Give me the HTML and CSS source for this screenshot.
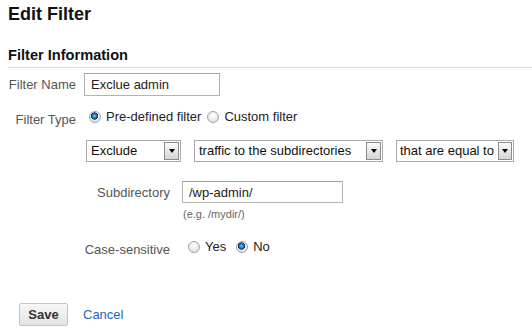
FILE: index.html
```html
<!DOCTYPE html>
<html>
<head>
<meta charset="utf-8">
<title>Edit Filter</title>
<link rel="stylesheet" href="styles.css">
</head>
<body>
<div class="page">
  <h1 class="title">Edit Filter</h1>
  <h2 class="section">Filter Information</h2>
  <div class="form">
    <div class="row name-row">
      <label class="lbl" for="fname">Filter Name</label>
      <input id="fname" class="textbox name-box" type="text" value="Exclue admin">
    </div>
    <div class="row type-row">
      <span class="lbl">Filter Type</span>
      <label class="option first"><input class="radio" type="radio" name="ftype" checked>Pre-defined filter</label>
      <label class="option second"><input class="radio" type="radio" name="ftype">Custom filter</label>
    </div>
    <div class="selects">
      <div class="select s1"><span class="select-text">Exclude</span><span class="arrow"></span></div>
      <div class="select s2"><span class="select-text">traffic to the subdirectories</span><span class="arrow"></span></div>
      <div class="select s3"><span class="select-text">that are equal to</span><span class="arrow"></span></div>
    </div>
    <div class="sub">
      <div class="row sub-row">
        <label class="sublbl" for="subdir">Subdirectory</label>
        <input id="subdir" class="textbox sub-box" type="text" value="/wp-admin/">
      </div>
      <div class="hint">(e.g. /mydir/)</div>
      <div class="row case-row">
        <span class="sublbl">Case-sensitive</span>
        <label class="option yes"><input class="radio" type="radio" name="case">Yes</label>
        <label class="option no"><input class="radio" type="radio" name="case" checked>No</label>
      </div>
    </div>
  </div>
  <div class="actions">
    <button class="save" type="button">Save</button>
    <a class="cancel" href="#">Cancel</a>
  </div>
</div>
</body>
</html>
```
FILE: styles.css
```css
* { box-sizing: border-box; }

body {
  margin: 0;
  font-family: "Liberation Sans", Arial, sans-serif;
  font-size: 13px;
  color: #222;
  background: #fff;
}

.page { padding-left: 8px; }

.title {
  margin: 3px 0 0;
  font-size: 18px;
  line-height: 22px;
  font-weight: bold;
  color: #111;
}

.section {
  margin: 21px 0 0;
  font-size: 14.6px;
  line-height: 18px;
  font-weight: bold;
  color: #111;
  padding-bottom: 3px;
  border-bottom: 1px solid #dcdcdc;
}

.form { padding-top: 5px; }

.row { display: flex; align-items: center; }

.lbl {
  flex: none;
  width: 68px;
  margin-right: 8px;
  text-align: right;
  white-space: nowrap;
  color: #555;
  line-height: 16px;
}

.textbox {
  display: block;
  margin: 0;
  padding: 0 6px;
  border: 1px solid #b3b3b3;
  border-top-color: #a0a0a0;
  font: inherit;
  font-size: 13px;
  color: #222;
  background: #fff;
  outline: none;
}

.name-box { width: 136px; height: 23px; }

.type-row { margin-top: 13px; height: 16px; align-items: flex-start; }
.type-row .lbl { padding-top: 3px; }

.option {
  display: flex;
  align-items: center;
  line-height: 16px;
  white-space: nowrap;
  color: #222;
}
.option.first { margin-left: 5px; }
.option.second { margin-left: 6px; }

.radio {
  appearance: none;
  -webkit-appearance: none;
  flex: none;
  width: 12px;
  height: 12px;
  margin: 0 5px 0 0;
  border-radius: 50%;
  border: 1px solid #a3a3a3;
  background: radial-gradient(circle at 50% 35%, #ffffff 0, #f2f2f2 35%, #d9d9d9 100%);
}
.radio:checked {
  background:
    radial-gradient(circle at 45% 40%, #9ad8ff 0, #3d93d8 1.3px, #17609f 2.6px, #0c3155 3.4px, rgba(12,49,85,0) 3.9px),
    radial-gradient(circle at 50% 35%, #ffffff 0, #f2f2f2 35%, #d9d9d9 100%);
}

.selects {
  display: flex;
  gap: 13px;
  margin: 15px 0 0 78px;
}

.select {
  display: flex;
  align-items: center;
  height: 22px;
  padding: 0 1px 0 4px;
  border: 1px solid #a9a9a9;
  background: #fff;
  color: #111;
}
.s1 { width: 95px; }
.s2 { width: 189px; }
.s3 { width: 118px; padding-left: 3px; }

.select-text {
  flex: 1;
  min-width: 0;
  line-height: 20px;
  white-space: nowrap;
  overflow: hidden;
}

.arrow {
  flex: none;
  display: flex;
  align-items: center;
  justify-content: center;
  width: 15px;
  height: 18px;
  border: 1px solid #8c8c8c;
  background: linear-gradient(#fbfbfb, #d4d4d4);
}
.s3 .arrow { width: 14px; }
.arrow::before {
  content: "";
  border-left: 3.5px solid transparent;
  border-right: 3.5px solid transparent;
  border-top: 4px solid #000;
}

.sub { margin: 19px 0 0 76px; }

.sublbl {
  flex: none;
  width: 86px;
  margin-right: 12px;
  text-align: right;
  white-space: nowrap;
  color: #555;
  line-height: 16px;
}

.sub-row .sublbl { padding-top: 2px; }
.sub-box { width: 161px; height: 22px; }

.hint {
  margin: 5px 0 0 99px;
  font-size: 11px;
  line-height: 13px;
  color: #666;
}

.case-row { margin-top: 18px; height: 16px; align-items: flex-start; }
.case-row .sublbl { padding-top: 3px; }
.option.yes { margin-left: 6px; }
.option.no { margin-left: 10px; }

.actions {
  display: flex;
  align-items: center;
  margin: 48px 0 0 11px;
}

.save {
  width: 49px;
  height: 23px;
  padding: 0;
  border: 1px solid #c4c4c4;
  border-radius: 2px;
  background: linear-gradient(#f8f8f8, #e3e3e3);
  font-family: inherit;
  font-size: 13px;
  font-weight: bold;
  color: #333;
}

.cancel {
  margin-left: 15px;
  color: #1a66c8;
  text-decoration: none;
}
```
